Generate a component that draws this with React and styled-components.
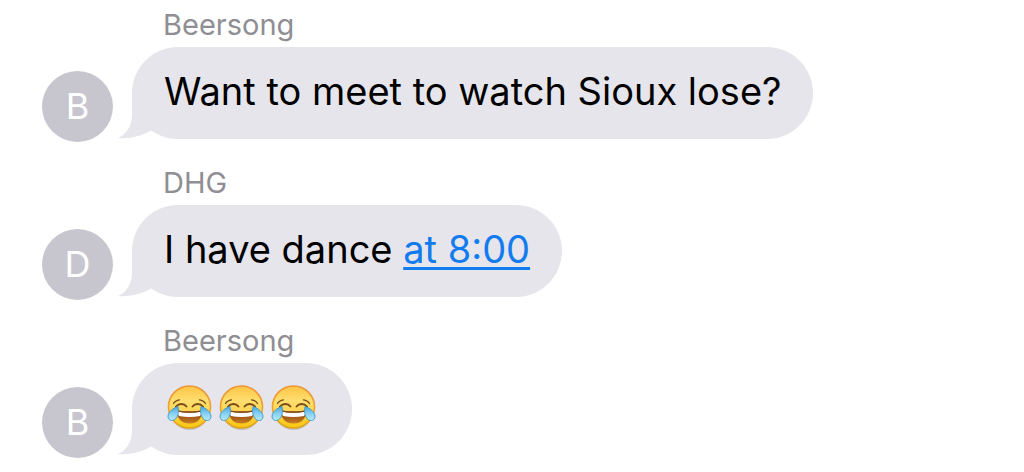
import React from "react";
import styled, { createGlobalStyle } from "styled-components";

const COLORS = {
  bubble: "#e5e5eb",
  avatar: "#c7c6ce",
  sender: "#8e8e93",
  link: "#127bee",
};

const MESSAGES = [
  { id: 1, sender: "Beersong", text: "Want to meet to watch Sioux lose?" },
  { id: 2, sender: "DHG", text: "I have dance ", link: "at 8:00" },
  { id: 3, sender: "Beersong", emoji: 3 },
];

export default function App() {
  return (
    <>
      <GlobalStyle />
      <EmojiDefs />
      <Thread>
        {MESSAGES.map((message) => (
          <Message key={message.id} {...message} />
        ))}
      </Thread>
    </>
  );
}

function Message({ sender, text, link, emoji = 0 }) {
  return (
    <Item>
      <Sender>{sender}</Sender>
      <Row>
        <Avatar aria-hidden="true">{sender[0]}</Avatar>
        <Bubble>
          <Tail viewBox="0 0 36 46" aria-hidden="true">
            <path d="M14 0V22C14 33 8 42 0 45C11 46 24 43 34 37L36 0Z" />
          </Tail>
          <Content>
            {text}
            {link && <TimeLink href="#event">{link}</TimeLink>}
            {Array.from({ length: emoji }, (_, i) => (
              <JoyEmoji key={i} />
            ))}
          </Content>
        </Bubble>
      </Row>
    </Item>
  );
}

// Gradients shared by every emoji face
function EmojiDefs() {
  return (
    <HiddenSvg aria-hidden="true">
      <defs>
        <linearGradient id="face" x1="0" y1="0" x2="0" y2="1">
          <stop offset="0" stopColor="#fdc443" />
          <stop offset="0.35" stopColor="#ffdf70" />
          <stop offset="0.65" stopColor="#fed34c" />
          <stop offset="1" stopColor="#fac60d" />
        </linearGradient>
        <linearGradient id="rim" x1="0" y1="0" x2="0" y2="1">
          <stop offset="0" stopColor="#ee9334" />
          <stop offset="0.6" stopColor="#efa52f" />
          <stop offset="1" stopColor="#dfa51b" />
        </linearGradient>
        <linearGradient id="mouth" x1="0" y1="0" x2="0" y2="1">
          <stop offset="0" stopColor="#84440f" />
          <stop offset="0.6" stopColor="#a9601a" />
          <stop offset="1" stopColor="#c88122" />
        </linearGradient>
        <linearGradient id="tear" x1="0" y1="0" x2="0" y2="1">
          <stop offset="0" stopColor="#4ba4da" />
          <stop offset="0.5" stopColor="#86d0f3" />
          <stop offset="1" stopColor="#b5eafb" />
        </linearGradient>
      </defs>
    </HiddenSvg>
  );
}

function JoyEmoji() {
  return (
    <Emoji viewBox="0 0 52 52" role="img" aria-label="Face with tears of joy">
      <ellipse cx="25.5" cy="28.5" rx="20" ry="20.5" fill="#8d8794" opacity="0.4" />
      <circle cx="25.5" cy="26" r="21" fill="url(#face)" stroke="url(#rim)" strokeWidth="1.6" />
      <g fill="none" stroke="#7a4a16" strokeLinecap="round">
        <path d="M9.5 22.5Q11 19.5 15.5 18.8" strokeWidth="1.3" />
        <path d="M35.5 18.8Q40 19.5 41.5 22.5" strokeWidth="1.3" />
        <path d="M12 25.5C15 22 20 22.2 22.5 25.5" strokeWidth="1.9" />
        <path d="M28.5 25.5C31 22.2 36 22 39 25.5" strokeWidth="1.9" />
      </g>
      <path d="M13 29.5Q25.5 32 38 29.5C38.5 38 33 42.5 25.5 42.5S12.5 38 13 29.5Z" fill="url(#mouth)" />
      <path d="M13.5 30.5Q25.5 33 37.5 30.5Q37.5 33.5 36 35Q25.5 36.8 15 35Q13.5 33.5 13.5 30.5Z" fill="#fff" />
      <path d="M13 29.8Q25.5 32.2 38 29.8" fill="none" stroke="#7c4518" strokeWidth="1.3" />
      <g fill="url(#tear)" stroke="#4297c4" strokeWidth="0.9">
        <path d="M14 25.5C9 27 4 31 4 35.5C4 40.5 10.5 41 13 36C15 32 14.5 29 14 25.5Z" />
        <path d="M37 25.5C42 27 47 31 47 35.5C47 40.5 40.5 41 38 36C36 32 36.5 29 37 25.5Z" />
      </g>
    </Emoji>
  );
}

const GlobalStyle = createGlobalStyle`
  body {
    margin: 0;
    background: #fff;
    font-family: Inter, "Liberation Sans", sans-serif;
  }
`;

const Thread = styled.main`
  display: flex;
  flex-direction: column;
  gap: 16px;
  padding: 0 42px;
`;

const Item = styled.article`
  display: flex;
  flex-direction: column;
`;

const Sender = styled.span`
  padding: 3px 0 0 121px;
  font-size: 29px;
  line-height: 44px;
  color: ${COLORS.sender};
`;

const Row = styled.div`
  display: flex;
  align-items: flex-end;
  gap: 19px;
`;

const Avatar = styled.div`
  flex: none;
  width: 71px;
  height: 71px;
  border-radius: 50%;
  background: ${COLORS.avatar};
  color: #fff;
  font-size: 36px;
  line-height: 71px;
  text-align: center;
`;

const Bubble = styled.div`
  position: relative;
  margin-bottom: 3px;
  padding: 18px 32px 22px;
  border-radius: 46px;
  background: ${COLORS.bubble};
  color: #000;
  font-size: 38px;
  line-height: 52px;
`;

const Tail = styled.svg`
  position: absolute;
  left: -14px;
  bottom: 0;
  width: 36px;
  height: 46px;
  fill: ${COLORS.bubble};
`;

// Sits above the tail, which reaches under the first letters
const Content = styled.div`
  position: relative;
`;

const TimeLink = styled.a`
  color: ${COLORS.link};
  text-decoration: underline;
  text-decoration-thickness: 3px;
  text-underline-offset: 4px;
  text-decoration-skip-ink: none;
`;

const Emoji = styled.svg`
  width: 52px;
  height: 52px;
  vertical-align: top;
`;

const HiddenSvg = styled.svg`
  position: absolute;
  width: 0;
  height: 0;
`;
